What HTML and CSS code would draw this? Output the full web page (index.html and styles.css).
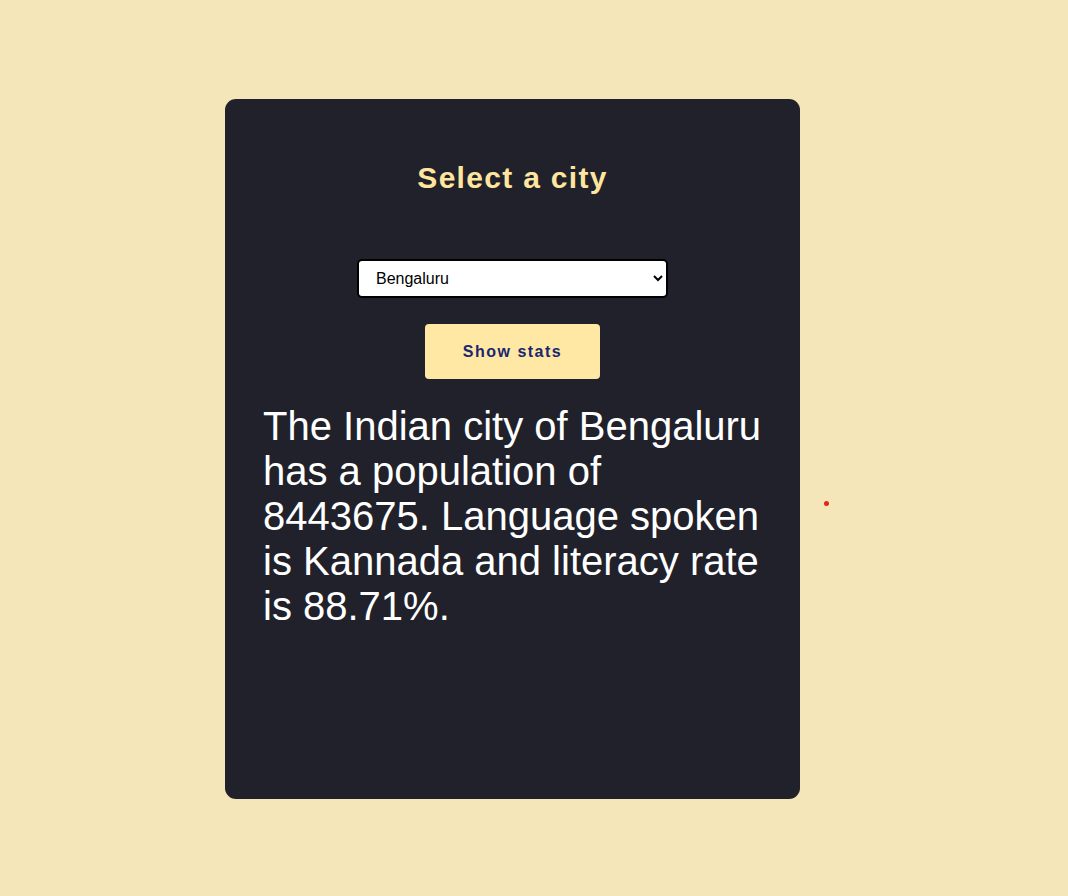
FILE: index.html
```html
<!DOCTYPE html>
<html>
<head>
<meta charset="utf-8">
<link rel="stylesheet" href="styles.css">
</head>
<body>
<main class="page">
  <section class="card">
    <h1 class="title">Select a city</h1>
    <select class="city-select">
      <option>Bengaluru</option>
      <option>Mumbai</option>
      <option>Delhi</option>
    </select>
    <button class="stats-btn">Show stats</button>
    <p class="result">The Indian city of Bengaluru has a population of 8443675. Language spoken is Kannada and literacy rate is 88.71%.</p>
  </section>
  <span class="dot"></span>
</main>
</body>
</html>
```
FILE: styles.css
```css
html, body {
  margin: 0;
  padding: 0;
}
body {
  background: #f5e6b9;
  font-family: "Liberation Sans", Arial, sans-serif;
  width: 1068px;
  height: 896px;
  overflow: hidden;
}
.page {
  position: relative;
  padding: 99px 0 0 225px;
}
.card {
  box-sizing: border-box;
  width: 575px;
  height: 700px;
  background: #20212b;
  border-radius: 11px;
  padding: 62px 38px 0;
  display: flex;
  flex-direction: column;
  align-items: center;
}
.title {
  margin: 0;
  color: #ffe59e;
  font-size: 30px;
  font-weight: bold;
  letter-spacing: 1.3px;
  line-height: 34px;
}
.city-select {
  margin-top: 64px;
  width: 311px;
  height: 39px;
  box-sizing: border-box;
  border: 2px solid #000;
  border-radius: 5px;
  background: #fff;
  color: #000;
  font-family: "Liberation Sans", Arial, sans-serif;
  font-size: 16px;
  padding: 0 12px 0 13px;
}
.stats-btn {
  margin-top: 26px;
  width: 175px;
  height: 55px;
  border: none;
  border-radius: 4px;
  background: #ffe8a3;
  color: #1a2670;
  font-family: "Liberation Sans", Arial, sans-serif;
  font-size: 16px;
  font-weight: bold;
  letter-spacing: 1.5px;
}
.result {
  align-self: stretch;
  margin: 25px 0 0;
  color: #fff;
  font-size: 40px;
  line-height: 45px;
}
.dot {
  position: absolute;
  left: 824px;
  top: 501px;
  width: 5px;
  height: 5px;
  border-radius: 50%;
  background: #e8221b;
}
```
